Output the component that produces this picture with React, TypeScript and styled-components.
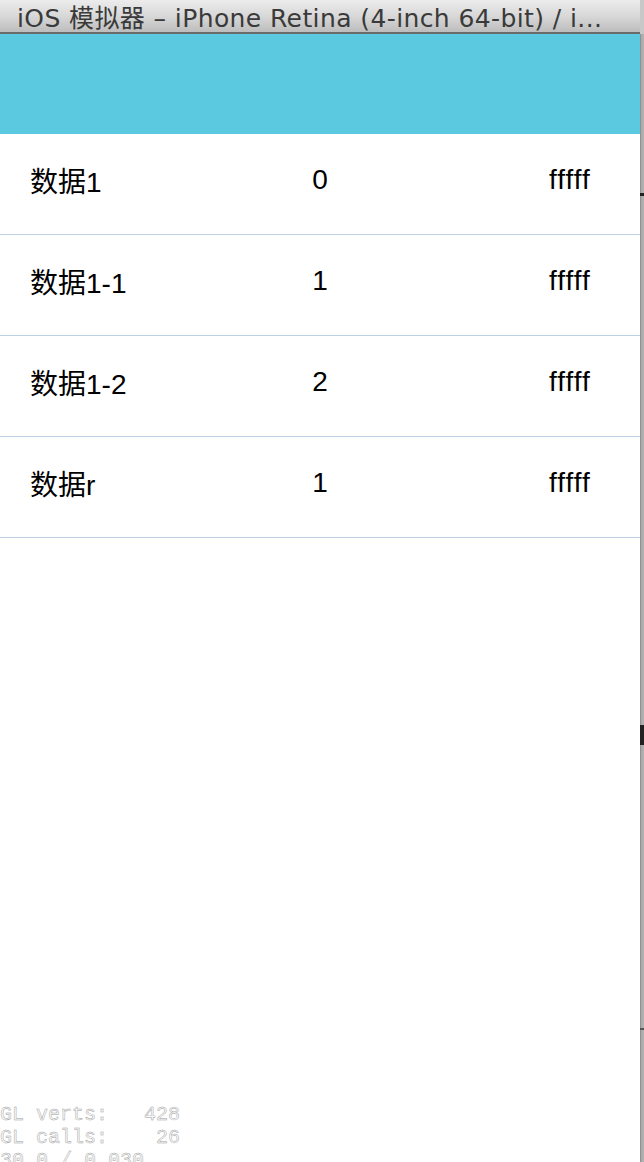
import React from "react";
import styled, { createGlobalStyle } from "styled-components";

const Global = createGlobalStyle`
  html, body { margin: 0; padding: 0; background: #ffffff; }
  body { width: 644px; height: 1162px; overflow: hidden; }
`;

const Screen = styled.div`
  display: flex;
  width: 644px;
  height: 1162px;
  overflow: hidden;
`;

const Window = styled.div`
  width: 640px;
  display: flex;
  flex-direction: column;
  background: #ffffff;
`;

const SideStrip = styled.div`
  width: 4px;
  background: linear-gradient(to right, #7a7a7a 0, #a8a8a8 1px, #b4b4b4 100%);
  position: relative;
`;

const Mark = styled.div<{ $top: number; $h: number; $color?: string }>`
  position: absolute;
  left: 0;
  width: 4px;
  top: ${(p) => p.$top}px;
  height: ${(p) => p.$h}px;
  background: ${(p) => p.$color ?? "#222"};
`;

const TitleBar = styled.div`
  height: 32px;
  flex: none;
  background: linear-gradient(to bottom, #ececec 0%, #d8d8d8 50%, #bdbdbd 100%);
  border-bottom: 2px solid #6b6b6b;
  display: flex;
  align-items: center;
  padding-left: 17px;
  font-family: "DejaVu Sans", "Noto Sans CJK SC", sans-serif;
  font-size: 25px;
  color: #3a3a3a;
  white-space: nowrap;
  overflow: hidden;
  letter-spacing: 0.4px;
`;

const NavBar = styled.div`
  height: 100px;
  flex: none;
  background: #5bc9df;
`;

const Row = styled.div`
  height: 101px;
  box-sizing: border-box;
  padding-bottom: 8px;
  border-bottom: 1px solid #bfd1e4;
  display: grid;
  grid-template-columns: 280px 80px 1fr;
  align-items: center;
  font-family: "Liberation Sans", "Noto Sans CJK SC", sans-serif;
  font-size: 28px;
  color: #000;
  flex: none;
`;

const Label = styled.div`
  padding-left: 30px;
`;

const Value = styled.div`
  text-align: center;
`;

const Extra = styled.div`
  padding-left: 189px;
  letter-spacing: 1px;
`;

const Spacer = styled.div`
  flex: 1;
`;

const Stats = styled.pre`
  margin: 0 0 -10px 0;
  font-family: "Liberation Mono", "DejaVu Sans Mono", monospace;
  font-size: 20px;
  line-height: 23px;
  color: #fafafa;
  -webkit-text-stroke: 0.45px #a0a0a0;
`;

const rows = [
  { label: "数据1", value: "0", extra: "fffff" },
  { label: "数据1-1", value: "1", extra: "fffff" },
  { label: "数据1-2", value: "2", extra: "fffff" },
  { label: "数据r", value: "1", extra: "fffff" },
];

export default function App() {
  return (
    <Screen>
      <Global />
      <Window>
        <TitleBar>iOS 模拟器 – iPhone Retina (4-inch 64-bit) / i...</TitleBar>
        <NavBar />
        {rows.map((r, i) => (
          <Row key={i}>
            <Label>{r.label}</Label>
            <Value>{r.value}</Value>
            <Extra>{r.extra}</Extra>
          </Row>
        ))}
        <Spacer />
        <Stats>{"GL verts:   428\nGL calls:    26\n30.0 / 0.030"}</Stats>
      </Window>
      <SideStrip>
        <Mark $top={0} $h={34} $color="#c8c8c8" />
        <Mark $top={193} $h={3} />
        <Mark $top={725} $h={20} />
        <Mark $top={1028} $h={2} $color="#555" />
      </SideStrip>
    </Screen>
  );
}
